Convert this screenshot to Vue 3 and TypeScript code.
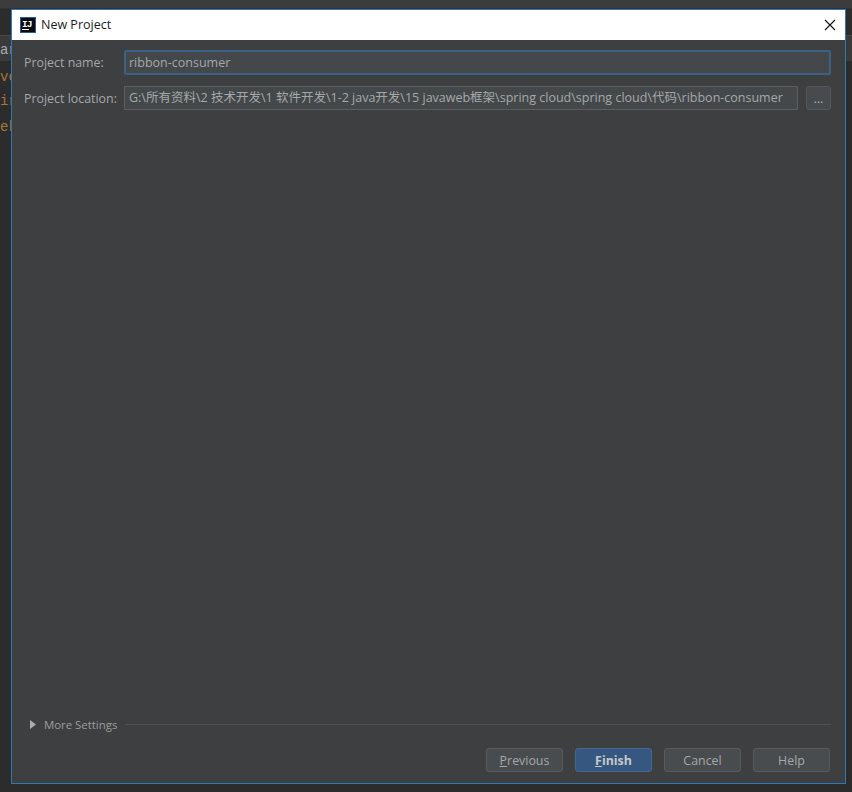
<script setup lang="ts">
const pathText = 'G:\\所有资料\\2 技术开发\\1 软件开发\\1-2 java开发\\15 javaweb框架\\spring cloud\\spring cloud\\代码\\ribbon-consumer'
const backdropLines = [
  { text: 'ar', cls: 'tab' },
  { text: 've', cls: 'code' },
  { text: 'ir', cls: 'code' },
  { text: 'ek', cls: 'code' },
]
</script>

<template>
  <div class="screen">
    <div class="backdrop">
      <div class="backdrop-top"></div>
      <div class="backdrop-band"></div>
      <div v-for="line in backdropLines" :key="line.text" :class="['backdrop-line', line.cls]">{{ line.text }}</div>
    </div>
    <div class="dialog">
      <header class="titlebar">
        <svg class="app-icon" width="16" height="16" viewBox="0 0 16 16">
          <rect x="0.5" y="0.5" width="15" height="15" fill="#0b0b10" stroke="#2b5a94" />
          <rect x="2" y="12" width="7" height="1" fill="#fff" />
          <text x="2" y="10" class="icon-text">IJ</text>
        </svg>
        <span class="title">New Project</span>
        <svg class="close" width="12" height="12" viewBox="0 0 12 12">
          <path d="M1 1L11 11M11 1L1 11" stroke="#111" stroke-width="1.1" fill="none" />
        </svg>
      </header>
      <main class="content">
        <div class="form">
          <label class="label">Project name:</label>
          <div class="name-input">ribbon-consumer</div>
          <label class="label">Project location:</label>
          <div class="location-row">
            <div class="location-input">{{ pathText }}</div>
            <button class="browse">...</button>
          </div>
        </div>
        <div class="spacer"></div>
        <div class="more">
          <svg width="6" height="9" viewBox="0 0 6 9"><path d="M0 0L6 4.5L0 9Z" fill="#a9adb0" /></svg>
          <span class="more-text">More Settings</span>
          <div class="rule"></div>
        </div>
        <footer class="buttons">
          <button class="btn"><u>P</u>revious</button>
          <button class="btn primary"><u>F</u>inish</button>
          <button class="btn">Cancel</button>
          <button class="btn">Help</button>
        </footer>
      </main>
    </div>
  </div>
</template>

<style>
html, body { margin: 0; background: #2b2b2b; }
</style>

<style scoped>
.screen {
  position: relative;
  width: 852px;
  height: 792px;
  box-sizing: border-box;
  padding: 9px 6px 8px 11px;
  background: #2c2c2c;
  overflow: hidden;
  font-family: "Open Sans", "Noto Sans CJK SC", sans-serif;
}
.backdrop { position: absolute; inset: 0; }
.backdrop-top { height: 8px; background: #3c3c3c; border-bottom: 1px solid #323232; }
.backdrop-band { position: absolute; left: 0; right: 0; top: 35px; height: 25px; background: #3a3a3a; border-top: 1px solid #484848; }
.backdrop-line { position: absolute; left: 0; font-size: 14px; line-height: 16px; font-family: "Liberation Mono", monospace; }
.backdrop-line.tab { top: 42px; color: #aaaaaa; }
.backdrop-line.code { color: #a8743a; }
.backdrop-line:nth-child(4) { top: 69px; }
.backdrop-line:nth-child(5) { top: 93px; }
.backdrop-line:nth-child(6) { top: 119px; }
.dialog {
  position: relative;
  width: 100%;
  height: 100%;
  box-sizing: border-box;
  display: flex;
  flex-direction: column;
  border: 1px solid #2f78b4;
  background: #3e3f41;
}
.titlebar {
  height: 30px;
  flex: none;
  display: flex;
  align-items: center;
  padding: 0 9px 1px 8px;
  box-sizing: border-box;
  background: #ffffff;
}
.app-icon { flex: none; margin-right: 5px; }
.icon-text { font: 700 9.5px "Liberation Mono", monospace; letter-spacing: -1px; fill: #fff; }
.title { flex: 1; font-size: 12.5px; color: #1c1c1c; font-family: "Open Sans", sans-serif; }
.close { flex: none; margin-right: 0; }
.content {
  flex: 1;
  min-height: 0;
  display: flex;
  flex-direction: column;
  padding: 10px 14px 11px 12px;
  background: #3e3f41;
}
.form {
  display: grid;
  grid-template-columns: 100px 1fr;
  column-gap: 0;
  row-gap: 11px;
  align-items: center;
}
.label { font-size: 12.4px; color: #a4a8aa; white-space: nowrap; }
.name-input {
  height: 25px;
  box-sizing: border-box;
  padding: 0 3px;
  line-height: 21px;
  border: 2px solid #3d6185;
  border-radius: 2px;
  background: #45484a;
  color: #a4a8a9;
  font-size: 12.5px;
}
.location-row { display: flex; align-items: center; gap: 8px; }
.location-input {
  flex: 1;
  min-width: 0;
  height: 24px;
  box-sizing: border-box;
  padding: 0 4px;
  line-height: 22px;
  border: 1px solid #5b5e60;
  background: #45484a;
  color: #a4a8a9;
  font-size: 12.5px;
  white-space: nowrap;
  overflow: hidden;
}
.browse {
  flex: none;
  width: 25px;
  height: 24px;
  padding: 0;
  border: 1px solid #55585a;
  border-radius: 3px;
  background: #484b4d;
  color: #b5b8ba;
  font: 12px "Open Sans", sans-serif;
}
.spacer { flex: 1; }
.more { display: flex; align-items: center; height: 16px; }
.more svg { margin-left: 6px; margin-right: 8px; }
.more-text { font-size: 11.4px; color: #9a9ea0; white-space: nowrap; }
.rule { flex: 1; height: 1px; margin-left: 8px; background: #505355; }
.buttons {
  display: flex;
  justify-content: flex-end;
  gap: 12px;
  margin-top: 16px;
  margin-right: 1px;
}
.btn {
  width: 77px;
  height: 24px;
  padding: 0;
  border: 1px solid #585b5d;
  border-radius: 3px;
  background: #494c4e;
  color: #a4a8a9;
  font: 12.4px "Open Sans", sans-serif;
}
.btn.primary {
  background: #365880;
  border-color: #43688f;
  color: #c3c8cc;
  font-weight: 700;
}
</style>
